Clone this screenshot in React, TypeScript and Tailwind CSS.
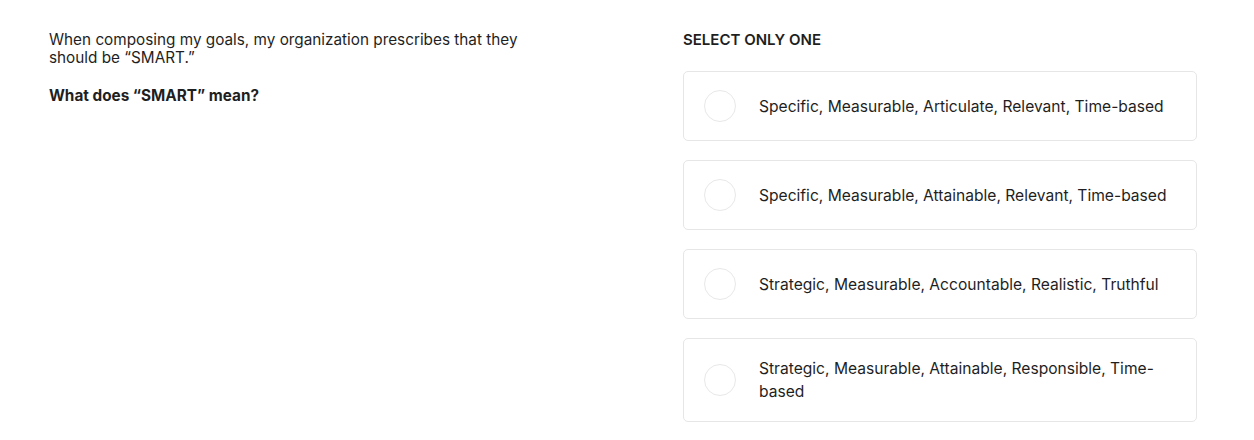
import React from 'react';

const options = [
  'Specific, Measurable, Articulate, Relevant, Time-based',
  'Specific, Measurable, Attainable, Relevant, Time-based',
  'Strategic, Measurable, Accountable, Realistic, Truthful',
  'Strategic, Measurable, Attainable, Responsible, Time-based',
];

const App: React.FC = () => {
  return (
    <div
      className="min-h-[440px] bg-white text-[#1f1f1f] pl-[49px] pr-[57px] pt-[31px]"
      style={{ fontFamily: 'Inter, "Noto Sans", sans-serif' }}
    >
      <div className="flex">
        <div className="w-[634px] shrink-0">
          <div className="w-[500px]">
            <p className="text-[15.3px] leading-[18px]">
              When composing my goals, my organization prescribes that they should be “SMART.”
            </p>
            <p className="mt-[20px] text-[15.3px] leading-[18px] font-bold">What does “SMART” mean?</p>
          </div>
        </div>

        <div className="flex-1">
          <h2 className="text-[15px] leading-[18px] font-semibold uppercase">Select only one</h2>
          <div className="mt-[22px] flex flex-col gap-[19px]">
            {options.map((opt) => (
              <button
                key={opt}
                className="flex items-center min-h-[70px] w-full rounded-[5px] border border-[#e6e6e6] bg-white pl-[20px] pr-[22px] py-[18px] text-left"
              >
                <span className="w-[32px] h-[32px] shrink-0 rounded-full border border-[#e8e8e8]" />
                <span className="ml-[23px] text-[15.6px] leading-[23px]">{opt}</span>
              </button>
            ))}
          </div>
        </div>
      </div>
    </div>
  );
};

export default App;
